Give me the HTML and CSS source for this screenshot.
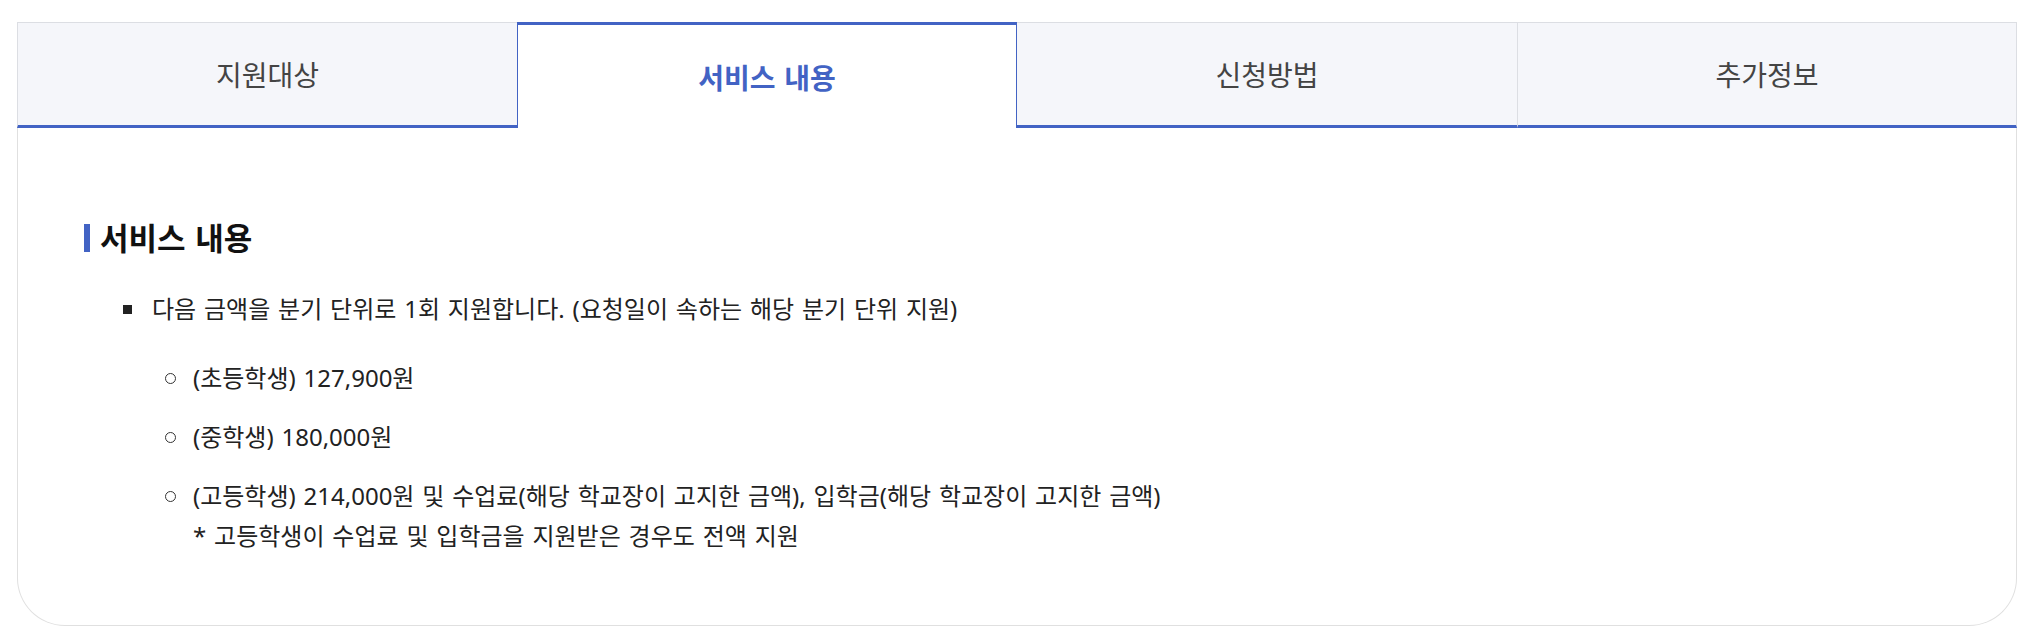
FILE: index.html
```html
<!DOCTYPE html>
<html lang="ko">
<head>
<meta charset="utf-8">
<title>서비스 내용</title>
<link rel="stylesheet" href="styles.css">
</head>
<body>
<div class="wrap">
  <ul class="tabs">
    <li class="tab">지원대상</li>
    <li class="tab active">서비스 내용</li>
    <li class="tab">신청방법</li>
    <li class="tab last">추가정보</li>
  </ul>
  <section class="panel">
    <h3 class="title">서비스 내용</h3>
    <ul class="list">
      <li class="item">
        <div class="item-body">
          <p class="line">다음 금액을 분기 단위로 1회 지원합니다. (요청일이 속하는 해당 분기 단위 지원)</p>
          <ul class="sub">
            <li class="sub-item"><div class="sub-body"><p class="line">(초등학생) 127,900원</p></div></li>
            <li class="sub-item"><div class="sub-body"><p class="line">(중학생) 180,000원</p></div></li>
            <li class="sub-item"><div class="sub-body"><p class="line">(고등학생) 214,000원 및 수업료(해당 학교장이 고지한 금액), 입학금(해당 학교장이 고지한 금액)</p><p class="line">* 고등학생이 수업료 및 입학금을 지원받은 경우도 전액 지원</p></div></li>
          </ul>
        </div>
      </li>
    </ul>
  </section>
</div>
</body>
</html>
```
FILE: styles.css
```css
* { box-sizing: border-box; }
html, body { margin: 0; padding: 0; background: #fff; }
body {
  font-family: "Noto Sans", "Noto Sans CJK KR", sans-serif;
  color: #222;
  word-spacing: 0.1em;
}
.wrap {
  width: 2034px;
  padding: 22px 17px 0;
}
.tabs {
  list-style: none;
  margin: 0;
  padding: 0;
  display: grid;
  grid-template-columns: repeat(4, 1fr);
}
.tab {
  height: 106px;
  display: flex;
  align-items: center;
  justify-content: center;
  font-size: 28px;
  color: #444;
  background: #f5f6fa;
  border-top: 1px solid #dcdee3;
  border-left: 1px solid #dcdee3;
  border-bottom: 3px solid #4263c4;
}
.tab.last { border-right: 1px solid #dcdee3; }
.tab.active {
  background: #fff;
  color: #4263c4;
  font-weight: 700;
  border-top: 3px solid #4263c4;
  border-left: 1px solid #4263c4;
  border-right: 1px solid #4263c4;
  border-bottom: 0;
}
.tab.active + .tab { border-left: 0; }

.panel {
  border: 1px solid #e0e0e0;
  border-top: 0;
  border-radius: 0 0 48px 48px;
  padding: 90px 66px 69px;
}
.title {
  margin: 0;
  display: flex;
  align-items: center;
  font-size: 31px;
  line-height: 40px;
  font-weight: 700;
  color: #111;
}
.title::before {
  content: "";
  width: 6px;
  height: 28px;
  background: #4263c4;
  margin-right: 10px;
}
.list, .sub {
  list-style: none;
  margin: 0;
  padding: 0;
}
.list { margin-top: 31px; }
.item {
  display: flex;
  padding-left: 39px;
  font-size: 24px;
  line-height: 40px;
}
.item::before {
  content: "";
  flex: none;
  width: 9px;
  height: 9px;
  background: #222;
  margin: 16px 20px 0 0;
}
.line { margin: 0; }
.sub { margin-top: 29px; }
.sub-item {
  display: flex;
  padding-left: 13px;
}
.sub-item + .sub-item { margin-top: 19px; }
.sub-item::before {
  content: "";
  flex: none;
  width: 9px;
  height: 9px;
  border: 1px solid #333;
  border-radius: 50%;
  margin: 15px 17px 0 0;
}
```
